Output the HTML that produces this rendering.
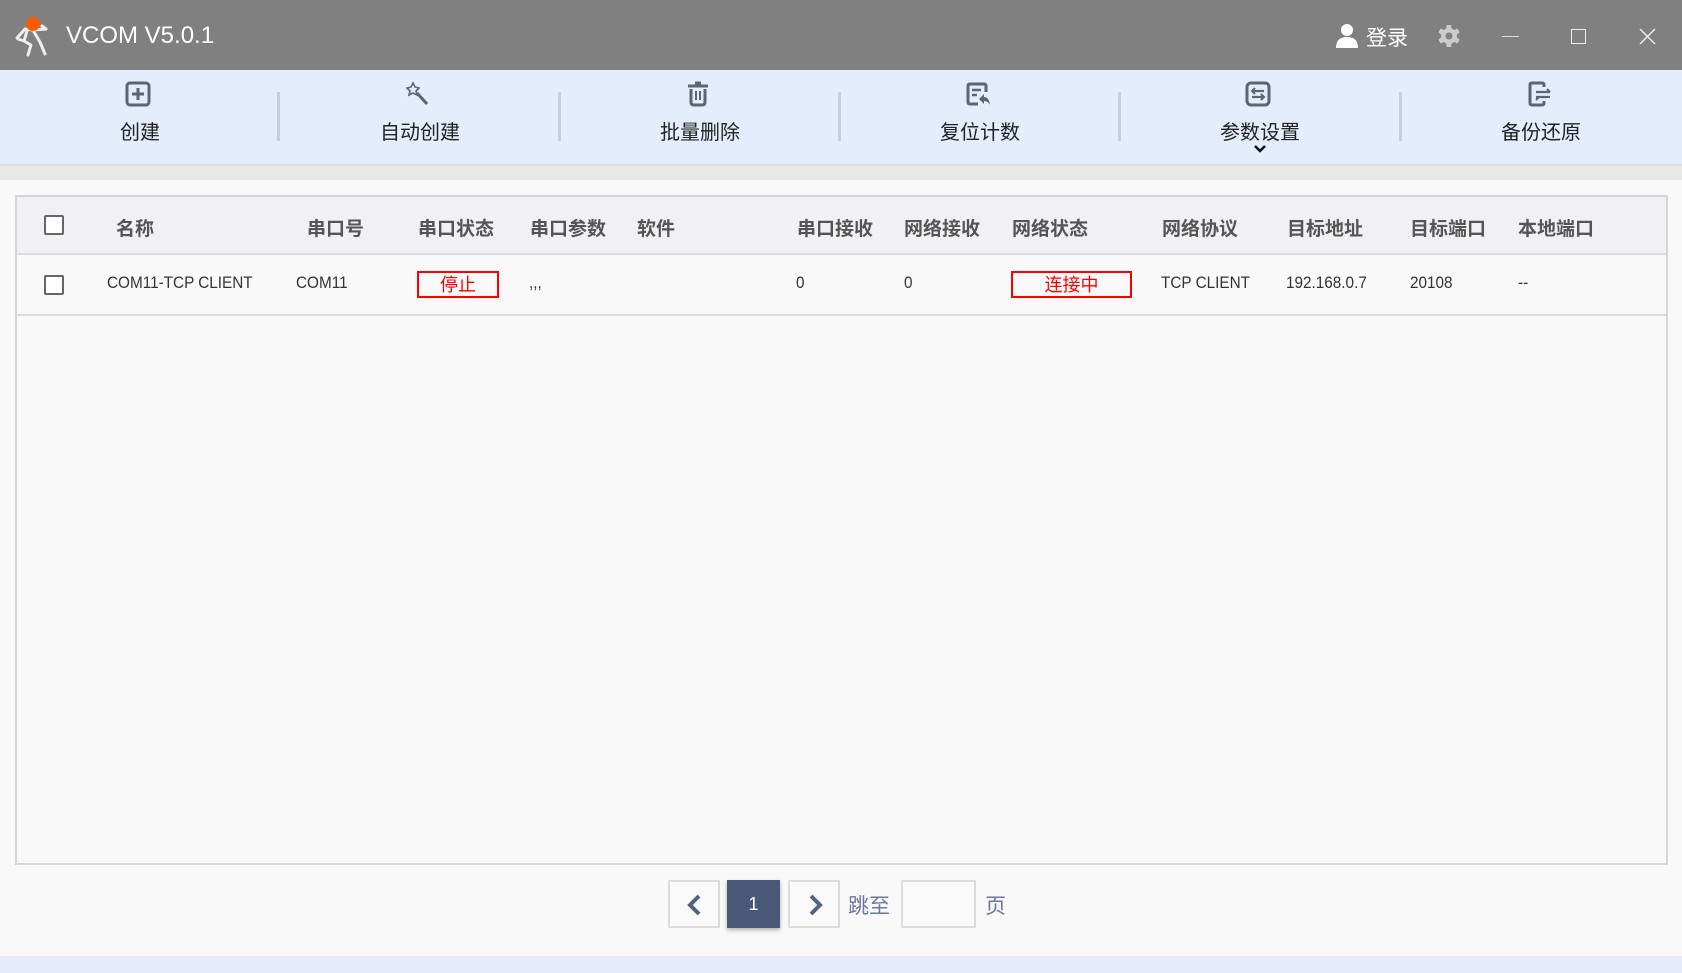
<!DOCTYPE html>
<html><head><meta charset="utf-8"><style>
*{margin:0;padding:0;box-sizing:border-box}
body{width:1682px;height:973px;background:#f9f9f9;font-family:"Liberation Sans","Noto Sans CJK SC",sans-serif;position:relative;overflow:hidden}
.abs{position:absolute}
.title{left:0;top:0;width:1682px;height:70px;background:#808080}
.tb{left:0;top:70px;width:1682px;height:94px;background:#e4edfb}
.tbi{position:absolute;top:0;width:280px;height:94px;text-align:center}
.tbi svg{position:absolute;left:125px;top:11px}
.tbi span{position:absolute;left:0;right:0;top:46px;font-size:20px;color:#222}
.div{position:absolute;top:22px;width:3px;height:49px;background:#c8cfdb}
.hd{font-size:19px;color:#555;top:214px;font-weight:bold}
.rw{font-size:17px;color:#333;top:273px;transform:scaleX(0.9);transform-origin:0 0}
.cb{width:20px;height:20px;border:2px solid #666;border-radius:2px;background:#fff}
.red{border:2px solid #f00;color:#f00;font-size:18px;text-align:center;line-height:23px;height:27px}
.pg{border:2px solid #ddd;background:#fafafa}
</style></head><body>
<div class="abs title">
 <svg class="abs" style="left:14px;top:14px" width="40" height="44" viewBox="0 0 40 44"><path d="M3 24 L11 15 L19 16 L32 15 M32 15 L28 12 M13 17 L10 27 L17 31 L14 41 M20 18 L26 28 L31 40 M10 27 L4 25" stroke="#eee" stroke-width="3" fill="none" stroke-linecap="round" stroke-linejoin="round"/><circle cx="19" cy="10" r="7" fill="#ff5a00"/></svg>
 <div class="abs" style="left:66px;top:22px;font-size:24px;color:#fff">VCOM V5.0.1</div>
 <svg class="abs" style="left:1336px;top:23px" width="22" height="25" viewBox="0 0 22 25"><circle cx="11" cy="7" r="6" fill="#fff"/><path d="M0 25 Q0 14 11 14 Q22 14 22 25Z" fill="#fff"/></svg>
 <div class="abs" style="left:1366px;top:22px;font-size:21px;color:#fff">登录</div>
 <svg class="abs" style="left:1437px;top:24px" width="24" height="24" viewBox="0 0 24 24"><g fill="#ccc"><rect x="9.5" y="1" width="5" height="22" rx="1"/><rect x="9.5" y="1" width="5" height="22" rx="1" transform="rotate(60 12 12)"/><rect x="9.5" y="1" width="5" height="22" rx="1" transform="rotate(120 12 12)"/><circle cx="12" cy="12" r="8"/></g><circle cx="12" cy="12" r="3.5" fill="#808080"/></svg>
 <div class="abs" style="left:1502px;top:36px;width:17px;height:1px;background:#ddd"></div>
 <div class="abs" style="left:1571px;top:29px;width:15px;height:15px;border:1.5px solid #eee"></div>
 <svg class="abs" style="left:1639px;top:28px" width="17" height="17"><path d="M1 1L16 16M16 1L1 16" stroke="#eee" stroke-width="1.5"/></svg>
</div>
<div class="abs tb">
 <div class="tbi" style="left:0"><svg width="26" height="26" viewBox="0 0 26 26"><rect x="2" y="2" width="22" height="22" rx="3" fill="none" stroke="#5a6670" stroke-width="3"/><path d="M13 7v12M7 13h12" stroke="#5a6670" stroke-width="3"/></svg><span>创建</span></div>
 <div class="div" style="left:277px"></div>
 <div class="tbi" style="left:280px"><svg width="26" height="26" viewBox="0 0 26 26"><path d="M8 2l2 4 4 1-3 3 1 4-4-2-4 2 1-4-3-3 4-1z" fill="none" stroke="#5a6670" stroke-width="1.6"/><path d="M12 12l10 11" stroke="#5a6670" stroke-width="3"/></svg><span>自动创建</span></div>
 <div class="div" style="left:558px"></div>
 <div class="tbi" style="left:560px"><svg width="26" height="26" viewBox="0 0 26 26"><path d="M3 5h20M10 2h6" stroke="#5a6670" stroke-width="3"/><path d="M6 8v13q0 3 3 3h8q3 0 3-3V8" fill="none" stroke="#5a6670" stroke-width="3"/><path d="M11 10v9M15 10v9" stroke="#5a6670" stroke-width="2"/></svg><span>批量删除</span></div>
 <div class="div" style="left:838px"></div>
 <div class="tbi" style="left:840px"><svg width="26" height="26" viewBox="0 0 26 26"><path d="M13 23H5q-2 0-2-2V5q0-2 2-2h14q2 0 2 2v6" fill="none" stroke="#5a6670" stroke-width="3"/><path d="M7 9h9M7 14h5" stroke="#5a6670" stroke-width="2.5"/><path d="M14 18l5-5v3q5 0 6 8q-2-4-6-4v3z" fill="#5a6670"/></svg><span>复位计数</span></div>
 <div class="div" style="left:1118px"></div>
 <div class="tbi" style="left:1120px"><svg width="26" height="26" viewBox="0 0 26 26"><rect x="2" y="2" width="22" height="22" rx="4" fill="none" stroke="#5a6670" stroke-width="3"/><path d="M7 10h12M7 16h12" stroke="#5a6670" stroke-width="2.2"/><path d="M10 7l-3 3 3 3M16 13l3 3-3 3" fill="none" stroke="#5a6670" stroke-width="2"/></svg><span>参数设置</span>
 <svg style="position:absolute;left:133px;top:74px" width="14" height="9"><path d="M2 2l5 5 5-5" fill="none" stroke="#111" stroke-width="2.5"/></svg></div>
 <div class="div" style="left:1399px"></div>
 <div class="tbi" style="left:1401px"><svg width="26" height="26" viewBox="0 0 26 26"><path d="M18 6V4q0-2-2-2H6q-2 0-2 2v18q0 2 2 2h10q2 0 2-2v-2" fill="none" stroke="#5a6670" stroke-width="3"/><path d="M10 11h14M10 16h14" stroke="#5a6670" stroke-width="2.2"/><path d="M21 8l3 3M13 16l-3 3" stroke="#5a6670" stroke-width="2"/></svg><span>备份还原</span></div>
</div>
<div class="abs" style="left:0;top:164px;width:1682px;height:16px;background:#e8e8e8;border-top:2px solid #ddd"></div>
<div class="abs" style="left:15px;top:195px;width:1653px;height:670px;border:2px solid #d6d6d6;background:#f9f9f9"></div>
<div class="abs" style="left:17px;top:197px;width:1649px;height:58px;background:#f1f1f4;border-bottom:2px solid #dcdcdc"></div>
<div class="abs" style="left:17px;top:314px;width:1649px;height:2px;background:#dcdcdc"></div>
<div class="abs cb" style="left:44px;top:215px"></div>
<div class="abs hd" style="left:116px">名称</div>
<div class="abs hd" style="left:307px">串口号</div>
<div class="abs hd" style="left:418px">串口状态</div>
<div class="abs hd" style="left:530px">串口参数</div>
<div class="abs hd" style="left:637px">软件</div>
<div class="abs hd" style="left:797px">串口接收</div>
<div class="abs hd" style="left:904px">网络接收</div>
<div class="abs hd" style="left:1012px">网络状态</div>
<div class="abs hd" style="left:1162px">网络协议</div>
<div class="abs hd" style="left:1287px">目标地址</div>
<div class="abs hd" style="left:1410px">目标端口</div>
<div class="abs hd" style="left:1518px">本地端口</div>
<div class="abs cb" style="left:44px;top:275px"></div>
<div class="abs rw" style="left:107px">COM11-TCP CLIENT</div>
<div class="abs rw" style="left:296px">COM11</div>
<div class="abs red" style="left:417px;top:271px;width:82px;line-height:25px">停止</div>
<div class="abs rw" style="left:529px">,,,</div>
<div class="abs rw" style="left:796px">0</div>
<div class="abs rw" style="left:904px">0</div>
<div class="abs red" style="left:1011px;top:271px;width:121px;line-height:25px">连接中</div>
<div class="abs rw" style="left:1161px">TCP CLIENT</div>
<div class="abs rw" style="left:1286px">192.168.0.7</div>
<div class="abs rw" style="left:1410px">20108</div>
<div class="abs rw" style="left:1518px">--</div>
<div class="abs pg" style="left:668px;top:880px;width:52px;height:48px"><svg style="position:absolute;left:15px;top:12px" width="20" height="22"><path d="M14 2L5 11l9 9" fill="none" stroke="#55627f" stroke-width="4"/></svg></div>
<div class="abs" style="left:727px;top:880px;width:53px;height:48px;background:#4a5878;color:#fff;font-size:18px;text-align:center;line-height:48px;box-shadow:0 2px 4px rgba(0,0,0,.3)">1</div>
<div class="abs pg" style="left:788px;top:880px;width:52px;height:48px"><svg style="position:absolute;left:16px;top:12px" width="20" height="22"><path d="M5 2l9 9-9 9" fill="none" stroke="#55627f" stroke-width="4"/></svg></div>
<div class="abs" style="left:848px;top:890px;font-size:21px;color:#6a7899">跳至</div>
<div class="abs pg" style="left:901px;top:880px;width:75px;height:48px"></div>
<div class="abs" style="left:985px;top:890px;font-size:21px;color:#6a7899">页</div>
<div class="abs" style="left:0;top:956px;width:1682px;height:17px;background:#e4ebfb"></div>
</body></html>
